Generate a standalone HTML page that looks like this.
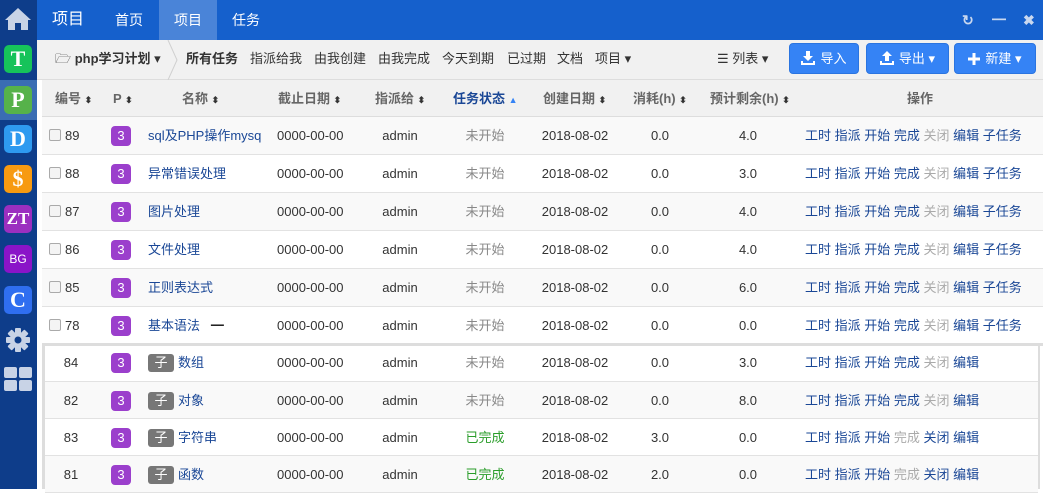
<!DOCTYPE html>
<html><head><meta charset="utf-8"><style>
*{margin:0;padding:0;box-sizing:border-box}
body{width:1043px;height:489px;overflow:hidden;background:#fff;font-family:"Liberation Sans","Noto Sans CJK SC",sans-serif;font-size:13px;color:#333;position:relative}
.abs{position:absolute}
#side{left:0;top:0;width:37px;height:489px;background:#0e3d8a}
.ic{position:absolute;left:4px;width:28px;height:28px;border-radius:5px;color:#fff;font-weight:bold;text-align:center;line-height:28px;font-family:"Liberation Serif",serif;font-size:22px}
#top{left:37px;top:0;width:1006px;height:40px;background:#1560cc;color:#fff}
#top span{position:absolute;top:0;line-height:40px;font-size:14px}
#tb{left:37px;top:40px;width:1006px;height:40px;background:#f1f1f1;border-bottom:1px solid #ddd}
#tb span{position:absolute;top:0;line-height:38px;font-size:13px;color:#333}
.btn{position:absolute;top:3px;height:31px;background:#3583f5;border:1px solid #2a74e0;border-radius:4px;color:#fff;line-height:29px;font-size:13px;text-align:center}
.btn svg{vertical-align:-2px;margin-right:5px}
#hd{left:42px;top:80px;width:1001px;height:37px;background:#f1f1f1;border-bottom:1px solid #ddd;color:#666;font-weight:bold}
#hd span{position:absolute;line-height:37px;top:0}
.so{font-size:9px;color:#333}
.r{position:absolute;left:42px;width:1001px;height:38px;border-bottom:1px solid #e2e2e2}
.r span,.r i{position:absolute;top:0;line-height:37px;font-style:normal}
.g{background:#f9f9f9}
.cb{left:7px;top:12px!important;width:12px;height:12px;border:1px solid #aaa;border-radius:2px;background:#f4f4f4}
.id{left:23px}
.cid{left:18px;width:22px;text-align:center}
.p{left:69px;top:9px!important;width:20px;height:20px;line-height:20px!important;border-radius:4px;background:#9b3fcc;color:#fff;text-align:center;font-size:13px}
.nm{left:106px;width:113px;overflow:hidden;white-space:nowrap;color:#1a4796}
.zi{left:106px;top:10px!important;width:26px;height:18px;line-height:18px!important;background:#777;color:#fff;border-radius:3px;text-align:center}
.cn{left:136px;color:#1a4796}
.dl{left:235px}
.as{left:318px;width:80px;text-align:center}
.st{left:403px;width:80px;text-align:center;color:#888}
.ok{color:#2a9d2a}
.cr{left:493px;width:80px;text-align:center}
.cs{left:578px;width:80px;text-align:center}
.rm{left:666px;width:80px;text-align:center}
.op{left:763px;color:#1a4796;white-space:nowrap}
.op b{font-weight:normal;color:#aaa}
.ch span{margin-left:-3px}
</style></head><body>
<div id="side" class="abs">
 <svg class="abs" style="left:4px;top:7px" width="28" height="24" viewBox="0 0 28 24"><path d="M14 1 L1 13 L4 13 L4 23 L11 23 L11 16 L17 16 L17 23 L24 23 L24 13 L27 13 Z" fill="#c8d3e6"/></svg>
 <div class="ic" style="top:45px;background:#16c35a">T</div>
 <div class="abs" style="left:0;top:80px;width:37px;height:40px;background:#3a6db3"></div>
 <div class="ic" style="top:86px;background:#56b24a">P</div>
 <div class="ic" style="top:125px;background:#2e9af0">D</div>
 <div class="ic" style="top:165px;background:#f79a11">$</div>
 <div class="ic" style="top:205px;background:#9b2fc0;font-size:17px">ZT</div>
 <div class="ic" style="top:245px;background:#8a14c8;font-size:12px;font-family:'Liberation Sans',sans-serif;font-weight:normal">BG</div>
 <div class="ic" style="top:286px;background:#2f6ef0">C</div>
 <svg class="abs" style="left:5px;top:327px" width="26" height="26" viewBox="0 0 26 26"><g fill="#c8d3e6"><circle cx="13" cy="13" r="8"/><rect x="10" y="1" width="6" height="24" rx="1"/><rect x="1" y="10" width="24" height="6" rx="1"/><rect x="10" y="1" width="6" height="24" rx="1" transform="rotate(45 13 13)"/><rect x="10" y="1" width="6" height="24" rx="1" transform="rotate(-45 13 13)"/></g><circle cx="13" cy="13" r="3.5" fill="#0e3d8a"/></svg>
 <svg class="abs" style="left:4px;top:367px" width="28" height="24"><g fill="#c8d3e6"><rect x="0" y="0" width="13" height="11" rx="2"/><rect x="15" y="0" width="13" height="11" rx="2"/><rect x="0" y="13" width="13" height="11" rx="2"/><rect x="15" y="13" width="13" height="11" rx="2"/></g></svg>
</div>
<div id="top" class="abs">
 <span style="left:15px;font-size:16px">项目</span>
 <span style="left:78px">首页</span>
 <span style="left:122px;width:58px;background:#4a84d8;text-align:center">项目</span>
 <span style="left:195px">任务</span>
 <span style="left:925px;font-weight:bold;color:#c9d8ef">↻</span>
 <span style="left:955px;font-weight:bold;color:#c9d8ef">━</span>
 <span style="left:986px;font-weight:bold;color:#c9d8ef">✖</span>
</div>
<div id="tb" class="abs">
 <span style="left:18px">🗁 <b style="font-weight:bold">php学习计划</b> ▾</span>
 <svg class="abs" style="left:130px;top:0" width="12" height="40"><path d="M1 0 L10 20 L1 40" stroke="#d0d0d0" fill="none"/></svg>
 <span style="left:149px;font-weight:bold">所有任务</span>
 <span style="left:213px">指派给我</span>
 <span style="left:277px">由我创建</span>
 <span style="left:341px">由我完成</span>
 <span style="left:405px">今天到期</span>
 <span style="left:470px">已过期</span>
 <span style="left:520px">文档</span>
 <span style="left:558px">项目 ▾</span>
 <span style="left:680px">☰ 列表 ▾</span>
 <div class="btn" style="left:752px;width:70px"><svg width="14" height="14" viewBox="0 0 14 14"><path d="M5 0h4v5h3L7 10 2 5h3z M0 10h2v2h10v-2h2v4H0z" fill="#fff"/></svg>导入</div>
 <div class="btn" style="left:829px;width:83px"><svg width="14" height="14" viewBox="0 0 14 14"><path d="M5 10h4V5h3L7 0 2 5h3z M0 10h2v2h10v-2h2v4H0z" fill="#fff"/></svg>导出 ▾</div>
 <div class="btn" style="left:917px;width:82px"><svg width="12" height="12" viewBox="0 0 12 12"><path d="M4.5 0h3v4.5H12v3H7.5V12h-3V7.5H0v-3h4.5z" fill="#fff"/></svg>新建 ▾</div>
</div>
<div id="hd" class="abs">
 <span style="left:13px">编号 <b class="so">⬍</b></span>
 <span style="left:71px">P <b class="so">⬍</b></span>
 <span style="left:140px">名称 <b class="so">⬍</b></span>
 <span style="left:236px">截止日期 <b class="so">⬍</b></span>
 <span style="left:333px">指派给 <b class="so">⬍</b></span>
 <span style="left:411px;color:#1a4796">任务状态 <b class="so" style="color:#3583f5">▲</b></span>
 <span style="left:501px">创建日期 <b class="so">⬍</b></span>
 <span style="left:591px">消耗(h) <b class="so">⬍</b></span>
 <span style="left:668px">预计剩余(h) <b class="so">⬍</b></span>
 <span style="left:865px">操作</span>
</div>
<div class="r g" style="top:117px"><i class="cb"></i><span class="id">89</span><span class="p">3</span><span class="nm">sql及PHP操作mysql</span><span class="dl">0000-00-00</span><span class="as">admin</span><span class="st">未开始</span><span class="cr">2018-08-02</span><span class="cs">0.0</span><span class="rm">4.0</span><span class="op">工时 指派 开始 完成 <b>关闭</b> 编辑 子任务</span></div>
<div class="r" style="top:155px"><i class="cb"></i><span class="id">88</span><span class="p">3</span><span class="nm">异常错误处理</span><span class="dl">0000-00-00</span><span class="as">admin</span><span class="st">未开始</span><span class="cr">2018-08-02</span><span class="cs">0.0</span><span class="rm">3.0</span><span class="op">工时 指派 开始 完成 <b>关闭</b> 编辑 子任务</span></div>
<div class="r g" style="top:193px"><i class="cb"></i><span class="id">87</span><span class="p">3</span><span class="nm">图片处理</span><span class="dl">0000-00-00</span><span class="as">admin</span><span class="st">未开始</span><span class="cr">2018-08-02</span><span class="cs">0.0</span><span class="rm">4.0</span><span class="op">工时 指派 开始 完成 <b>关闭</b> 编辑 子任务</span></div>
<div class="r" style="top:231px"><i class="cb"></i><span class="id">86</span><span class="p">3</span><span class="nm">文件处理</span><span class="dl">0000-00-00</span><span class="as">admin</span><span class="st">未开始</span><span class="cr">2018-08-02</span><span class="cs">0.0</span><span class="rm">4.0</span><span class="op">工时 指派 开始 完成 <b>关闭</b> 编辑 子任务</span></div>
<div class="r g" style="top:269px"><i class="cb"></i><span class="id">85</span><span class="p">3</span><span class="nm">正则表达式</span><span class="dl">0000-00-00</span><span class="as">admin</span><span class="st">未开始</span><span class="cr">2018-08-02</span><span class="cs">0.0</span><span class="rm">6.0</span><span class="op">工时 指派 开始 完成 <b>关闭</b> 编辑 子任务</span></div>
<div class="r" style="top:307px;border-bottom:3px solid #ddd;height:39px"><i class="cb"></i><span class="id">78</span><span class="p">3</span><span class="nm">基本语法 &nbsp; <b style="color:#222">━</b></span><span class="dl">0000-00-00</span><span class="as">admin</span><span class="st">未开始</span><span class="cr">2018-08-02</span><span class="cs">0.0</span><span class="rm">0.0</span><span class="op">工时 指派 开始 完成 <b>关闭</b> 编辑 子任务</span></div>
<div class="abs" style="left:42px;top:346px;width:3px;height:143px;background:#ddd"></div>
<div class="abs" style="left:1038px;top:346px;width:2px;height:143px;background:#ddd"></div>
<div class="r ch" style="top:344px;left:45px;width:993px"><span class="cid">84</span><span class="p">3</span><span class="zi">子</span><span class="cn">数组</span><span class="dl">0000-00-00</span><span class="as">admin</span><span class="st">未开始</span><span class="cr">2018-08-02</span><span class="cs">0.0</span><span class="rm">3.0</span><span class="op">工时 指派 开始 完成 <b>关闭</b> 编辑</span></div>
<div class="r g ch" style="top:382px;left:45px;width:993px;height:37px"><span class="cid">82</span><span class="p">3</span><span class="zi">子</span><span class="cn">对象</span><span class="dl">0000-00-00</span><span class="as">admin</span><span class="st">未开始</span><span class="cr">2018-08-02</span><span class="cs">0.0</span><span class="rm">8.0</span><span class="op">工时 指派 开始 完成 <b>关闭</b> 编辑</span></div>
<div class="r ch" style="top:419px;left:45px;width:993px;height:37px"><span class="cid">83</span><span class="p">3</span><span class="zi">子</span><span class="cn">字符串</span><span class="dl">0000-00-00</span><span class="as">admin</span><span class="st ok">已完成</span><span class="cr">2018-08-02</span><span class="cs">3.0</span><span class="rm">0.0</span><span class="op">工时 指派 开始 <b>完成</b> 关闭 编辑</span></div>
<div class="r g ch" style="top:456px;left:45px;width:993px;height:37px"><span class="cid">81</span><span class="p">3</span><span class="zi">子</span><span class="cn">函数</span><span class="dl">0000-00-00</span><span class="as">admin</span><span class="st ok">已完成</span><span class="cr">2018-08-02</span><span class="cs">2.0</span><span class="rm">0.0</span><span class="op">工时 指派 开始 <b>完成</b> 关闭 编辑</span></div>
</body></html>
